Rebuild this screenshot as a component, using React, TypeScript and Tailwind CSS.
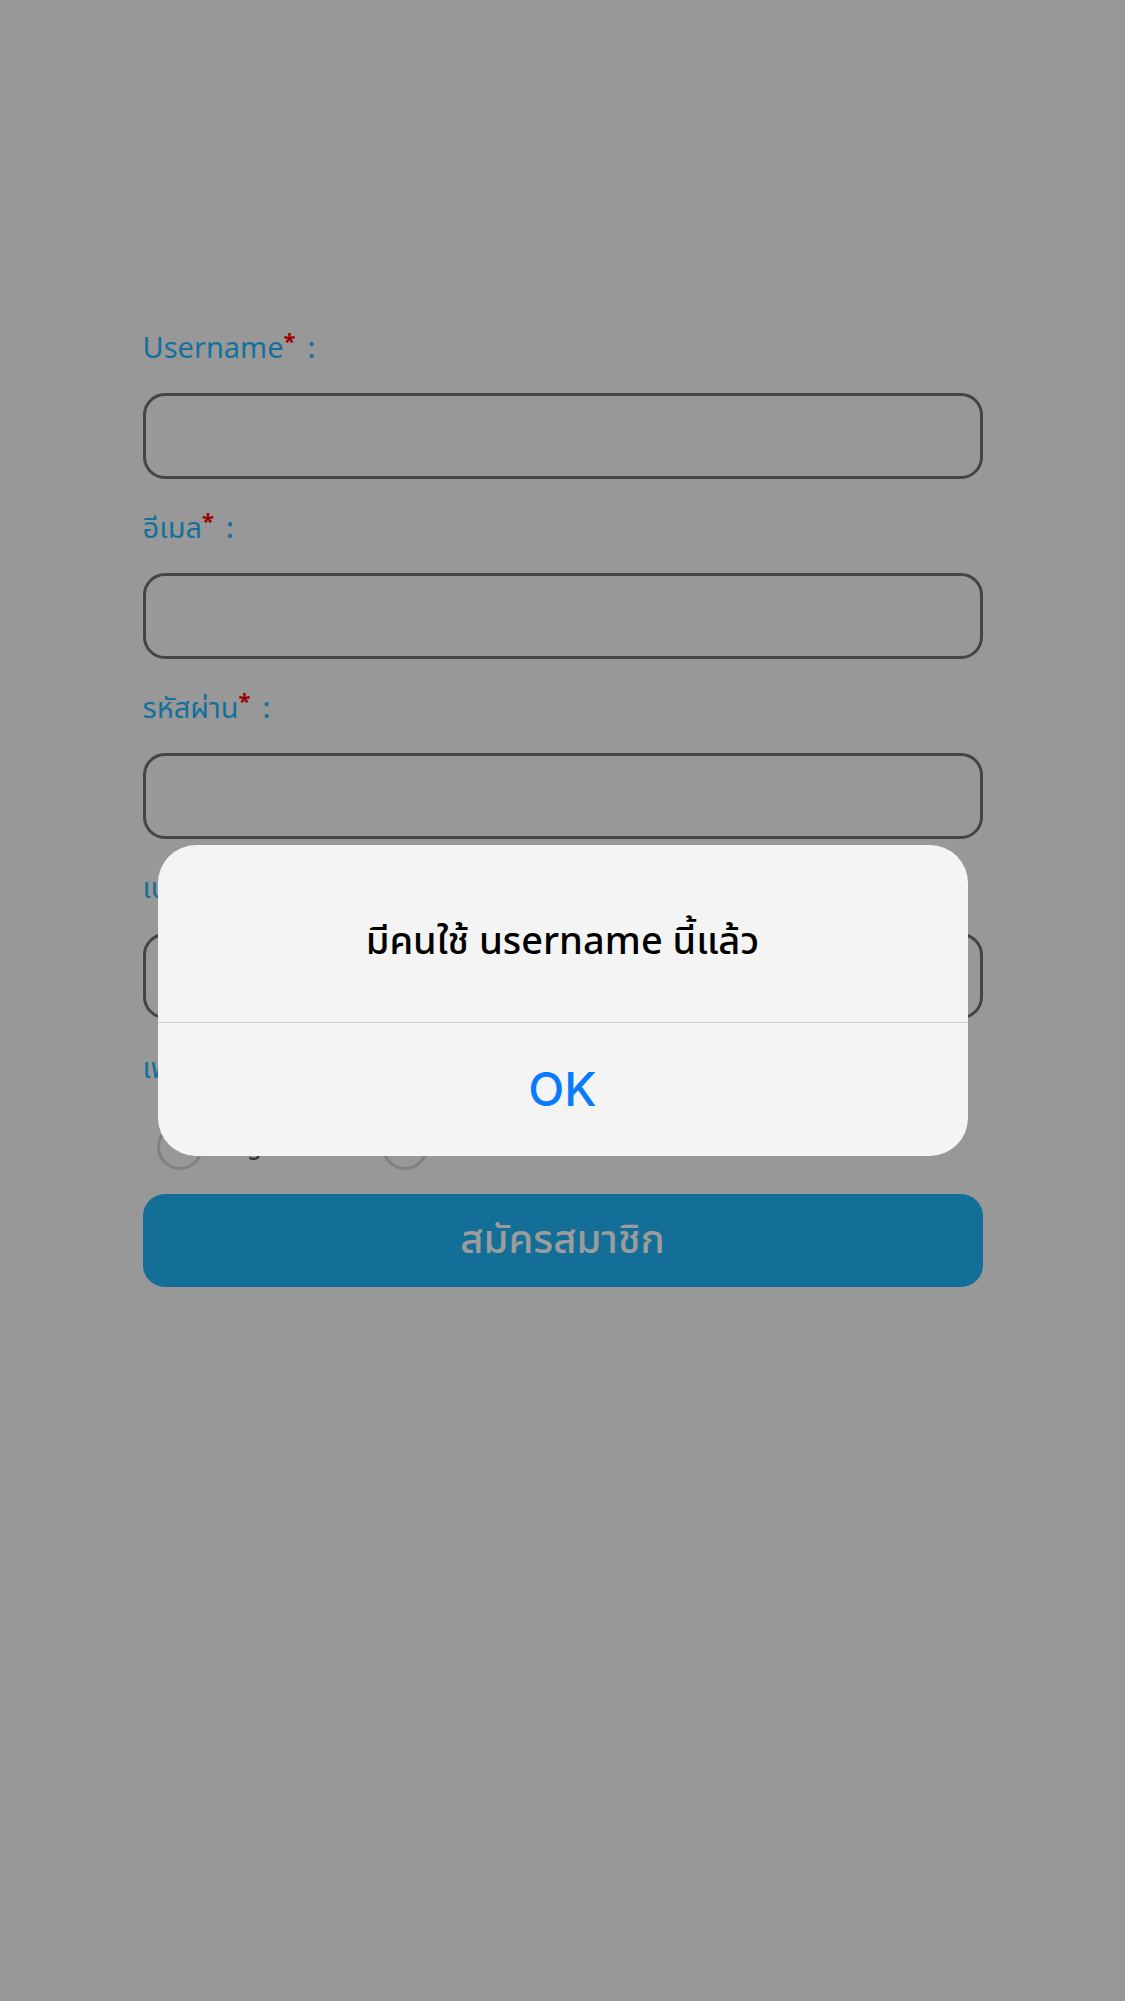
import React from "react";

const thai = { fontFamily: '"Noto Sans Thai", "Noto Sans Thai Looped", "Noto Sans", "Liberation Sans", sans-serif' };

function Label({ label }: { label: string }) {
  return (
    <div className="text-[29px] leading-[40px] text-[#15709a]">
      {label}
      <span className="text-[#9b0000] text-[22px] font-bold align-top relative top-[-6px]">*</span>
      <span className="ml-3 font-medium">:</span>
    </div>
  );
}

function Field({ label }: { label: string }) {
  return (
    <div className="flex flex-col">
      <Label label={label} />
      <div className="mt-[24px] h-[86px] rounded-[22px] border-[3px] border-[#454545]" />
    </div>
  );
}

export default function App() {
  return (
    <div className="min-h-[2001px] w-full bg-[#989898] relative" style={thai}>
      <div className="mx-auto w-[840px] pt-[329px] flex flex-col gap-[30px]">
        <Field label="Username" />
        <Field label="อีเมล" />
        <Field label="รหัสผ่าน" />
        <Field label="เบอร์โทรศัพท์" />
        <div className="flex flex-col">
          <Label label="เพศ" />
          <div className="mt-[35px] flex items-center gap-[20px] pl-[14px]">
            <div className="flex items-center gap-[18px] w-[205px]">
              <div className="w-[46px] h-[46px] rounded-full border-[3px] border-[#808080]" />
              <span className="text-[28px] text-[#333]">หญิง</span>
            </div>
            <div className="flex items-center gap-[18px]">
              <div className="w-[46px] h-[46px] rounded-full border-[3px] border-[#808080]" />
              <span className="text-[28px] text-[#333]">ชาย</span>
            </div>
          </div>
          <div className="mt-[24px] h-[93px] rounded-[22px] bg-[#136f98] flex items-center justify-center">
            <span className="text-[40px] font-medium text-[#9c9c9c]">สมัครสมาชิก</span>
          </div>
        </div>
      </div>

      <div className="absolute inset-0 flex items-center justify-center">
        <div className="w-[810px] h-[311px] rounded-[38px] bg-[#f4f4f4] flex flex-col overflow-hidden">
          <div className="h-[177px] pt-[18px] flex items-center justify-center">
            <span className="text-[38px] font-medium text-black">มีคนใช้ username นี้แล้ว</span>
          </div>
          <div className="h-px bg-[#cccccc]" />
          <div className="flex-1 flex items-center justify-center">
            <span className="text-[47px] font-medium text-[#0a7aff]" style={{ fontFamily: 'Inter, "Liberation Sans", sans-serif' }}>OK</span>
          </div>
        </div>
      </div>
    </div>
  );
}
